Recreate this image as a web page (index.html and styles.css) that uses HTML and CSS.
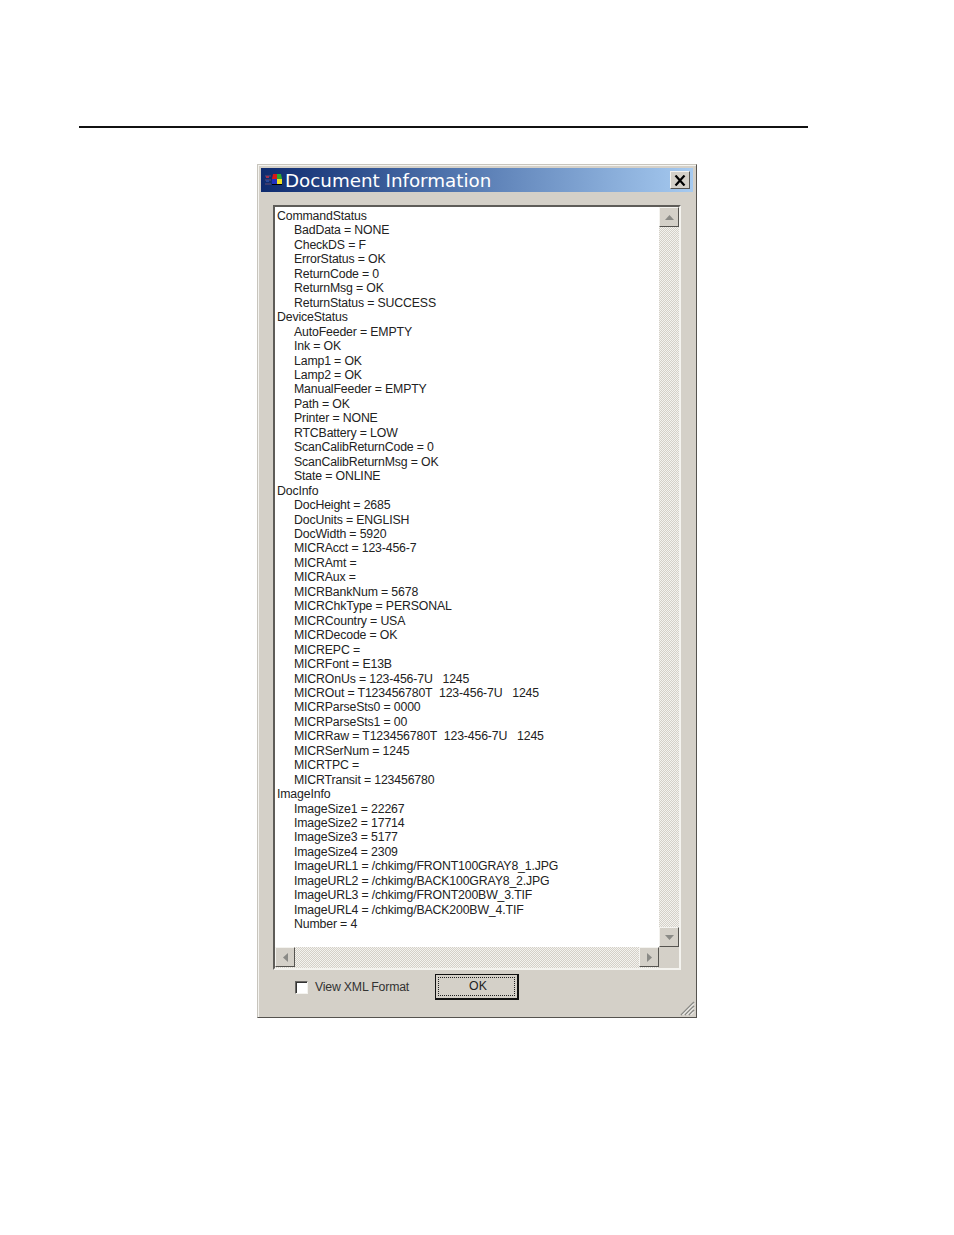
FILE: index.html
```html
<!DOCTYPE html>
<html lang="en">
<head>
<meta charset="utf-8">
<title>Document Information</title>
<link rel="stylesheet" href="styles.css">
</head>
<body>
<div class="rule"></div>
<section class="dialog">
  <header class="titlebar">
    <svg class="appicon" width="18" height="16" viewBox="0 0 18 16">
      <path d="M1 3h6v2H1zM1 7h6v2H1zM1 11h6v2H1z" fill="#3b3b6e"/>
      <path d="M2 4h3v2H2z" fill="#a03050"/>
      <path d="M2 8h3v2H2z" fill="#2b4a9a"/>
      <path d="M9 2h4v5H8z" fill="#d81818"/>
      <path d="M13 2h4l1 5h-5z" fill="#2fa82f"/>
      <path d="M8 7h5v5H8z" fill="#2030c0"/>
      <path d="M13 7h5l1 5h-6z" fill="#f0e020"/>
      <path d="M8 12h10v1H8z" fill="#000"/>
    </svg>
    <h1 class="title">Document Information</h1>
    <button class="close" type="button" aria-label="Close">
      <svg width="12" height="11" viewBox="0 0 12 11"><path d="M1.5 0.5l9 10M10.5 0.5l-9 10" stroke="#000" stroke-width="2.2" fill="none"/></svg>
    </button>
  </header>
  <div class="listbox">
    <div class="listrow">
      <div class="tree">
        <div class="node">CommandStatus</div>
        <div class="leaf">BadData = NONE</div>
        <div class="leaf">CheckDS = F</div>
        <div class="leaf">ErrorStatus = OK</div>
        <div class="leaf">ReturnCode = 0</div>
        <div class="leaf">ReturnMsg = OK</div>
        <div class="leaf">ReturnStatus = SUCCESS</div>
        <div class="node">DeviceStatus</div>
        <div class="leaf">AutoFeeder = EMPTY</div>
        <div class="leaf">Ink = OK</div>
        <div class="leaf">Lamp1 = OK</div>
        <div class="leaf">Lamp2 = OK</div>
        <div class="leaf">ManualFeeder = EMPTY</div>
        <div class="leaf">Path = OK</div>
        <div class="leaf">Printer = NONE</div>
        <div class="leaf">RTCBattery = LOW</div>
        <div class="leaf">ScanCalibReturnCode = 0</div>
        <div class="leaf">ScanCalibReturnMsg = OK</div>
        <div class="leaf">State = ONLINE</div>
        <div class="node">DocInfo</div>
        <div class="leaf">DocHeight = 2685</div>
        <div class="leaf">DocUnits = ENGLISH</div>
        <div class="leaf">DocWidth = 5920</div>
        <div class="leaf">MICRAcct = 123-456-7</div>
        <div class="leaf">MICRAmt =</div>
        <div class="leaf">MICRAux =</div>
        <div class="leaf">MICRBankNum = 5678</div>
        <div class="leaf">MICRChkType = PERSONAL</div>
        <div class="leaf">MICRCountry = USA</div>
        <div class="leaf">MICRDecode = OK</div>
        <div class="leaf">MICREPC =</div>
        <div class="leaf">MICRFont = E13B</div>
        <div class="leaf">MICROnUs = 123-456-7U&nbsp;&nbsp; 1245</div>
        <div class="leaf">MICROut = T123456780T&nbsp; 123-456-7U&nbsp;&nbsp; 1245</div>
        <div class="leaf">MICRParseSts0 = 0000</div>
        <div class="leaf">MICRParseSts1 = 00</div>
        <div class="leaf">MICRRaw = T123456780T&nbsp; 123-456-7U&nbsp;&nbsp; 1245</div>
        <div class="leaf">MICRSerNum = 1245</div>
        <div class="leaf">MICRTPC =</div>
        <div class="leaf">MICRTransit = 123456780</div>
        <div class="node">ImageInfo</div>
        <div class="leaf">ImageSize1 = 22267</div>
        <div class="leaf">ImageSize2 = 17714</div>
        <div class="leaf">ImageSize3 = 5177</div>
        <div class="leaf">ImageSize4 = 2309</div>
        <div class="leaf">ImageURL1 = /chkimg/FRONT100GRAY8_1.JPG</div>
        <div class="leaf">ImageURL2 = /chkimg/BACK100GRAY8_2.JPG</div>
        <div class="leaf">ImageURL3 = /chkimg/FRONT200BW_3.TIF</div>
        <div class="leaf">ImageURL4 = /chkimg/BACK200BW_4.TIF</div>
        <div class="leaf">Number = 4</div>
      </div>
      <div class="vscroll">
        <div class="sbtn"><svg width="9" height="5" viewBox="0 0 9 5"><path d="M4.5 0L9 5H0z" fill="#8a8a86"/></svg></div>
        <div class="sbtn"><svg width="9" height="5" viewBox="0 0 9 5"><path d="M0 0h9L4.500 5z" fill="#8a8a86"/></svg></div>
      </div>
    </div>
    <div class="hscroll">
      <div class="sbtn"><svg width="5" height="9" viewBox="0 0 5 9"><path d="M5 0v9L0 4.500z" fill="#8a8a86"/></svg></div>
      <div class="sbtn"><svg width="5" height="9" viewBox="0 0 5 9"><path d="M0 0v9l5-4.500z" fill="#8a8a86"/></svg></div>
      <div class="corner"></div>
    </div>
  </div>
  <footer class="actions">
    <label class="check"><span class="box"></span>View XML Format</label>
    <button class="ok" type="button"><span class="focus">OK</span></button>
  </footer>
  <svg class="grip" width="16" height="16" viewBox="0 0 16 16">
    <path d="M15 2L2 15M15 6L6 15M15 10L10 15" stroke="#8a8a86" stroke-width="1.500" fill="none"/>
    <path d="M15 3.500L3.500 15M15 7.500L7.500 15M15 11.500L11.500 15" stroke="#fff" stroke-width="1" fill="none"/>
  </svg>
</section>
</body>
</html>
```
FILE: styles.css
```css
* { box-sizing: border-box; }
html, body { margin: 0; padding: 0; background: #fff; }
body { height: 1235px; overflow: hidden; padding-top: 126px; font-family: "Liberation Sans", Arial, sans-serif; color: #222; }
.rule { width: 729px; height: 2px; margin-left: 79px; background: #111; }
.dialog {
  position: relative;
  width: 440px; height: 854px;
  margin: 36px 0 0 257px;
  padding: 3px;
  background: #d4d0c8;
  border: 1px solid;
  border-color: #c8c5bd #55534f #55534f #c8c5bd;
  box-shadow: inset 1px 1px 0 #f4f3ef;
}
.titlebar {
  display: flex; align-items: center;
  height: 24px;
  padding: 0 3px;
  background: linear-gradient(90deg, #0e2a6e 0%, #4a6ea8 40%, #a6caf0 100%);
}
.appicon { flex: none; margin-right: 3px; }
.title { flex: 1; margin: 0; padding-top: 2px; font-family: "DejaVu Sans", sans-serif; font-size: 18.300px; font-weight: 400; line-height: 24px; color: #fff; white-space: nowrap; }
.close {
  display: flex; align-items: center; justify-content: center;
  width: 20px; height: 18px; padding: 0;
  background: #d4d0c8;
  border: 1px solid; border-color: #f4f3ef #55534f #55534f #f4f3ef;
}
.listbox {
  width: 408px; height: 765px;
  margin: 13px 0 0 12px;
  background: #d4d0c8;
  border: 2px solid; border-color: #5e5c58 #f4f3ef #f4f3ef #5e5c58;
  display: flex; flex-direction: column;
}
.listrow { display: flex; height: 740px; }
.tree {
  flex: 1; padding: 2px 0 0 2px;
  background: #fff;
  font-size: 12.300px; line-height: 14.460px; white-space: nowrap; letter-spacing: -0.150px;
}
.leaf { padding-left: 17px; }
.vscroll, .hscroll { background: repeating-conic-gradient(#d4d0c8 0 25%, #f4f3ef 0 50%) 0 0 / 2px 2px; }
.vscroll { width: 20px; display: flex; flex-direction: column; justify-content: space-between; }
.hscroll { height: 21px; display: flex; align-items: stretch; }
.hscroll .sbtn:nth-child(2) { margin-left: auto; }
.sbtn {
  flex: none;
  display: flex; align-items: center; justify-content: center;
  width: 20px; height: 20px;
  background: #d4d0c8;
  border: 1px solid; border-color: #f4f3ef #55534f #55534f #f4f3ef;
}
.corner { width: 20px; flex: none; background: #d4d0c8; }
.actions { display: flex; align-items: center; height: 34px; padding-left: 34px; }
.check { display: flex; align-items: center; width: 140px; font-size: 12.300px; color: #333; letter-spacing: -0.200px; }
.box {
  width: 13px; height: 13px; margin-right: 7px;
  background: #fff;
  border: 1px solid; border-color: #6a6864 #f4f3ef #f4f3ef #6a6864;
  box-shadow: inset 1px 1px 0 #333;
}
.ok {
  width: 84px; height: 26px; padding: 2px;
  background: #d4d0c8;
  border: 1px solid #111;
  border-right-width: 2px; border-bottom-width: 2px;
  font: inherit; font-size: 12.300px; color: #222;
}
.focus { display: flex; align-items: center; justify-content: center; height: 100%; border: 1px dotted #222; padding: 0 0 2px 3px; }
.grip { position: absolute; right: 1px; bottom: 1px; }
```
